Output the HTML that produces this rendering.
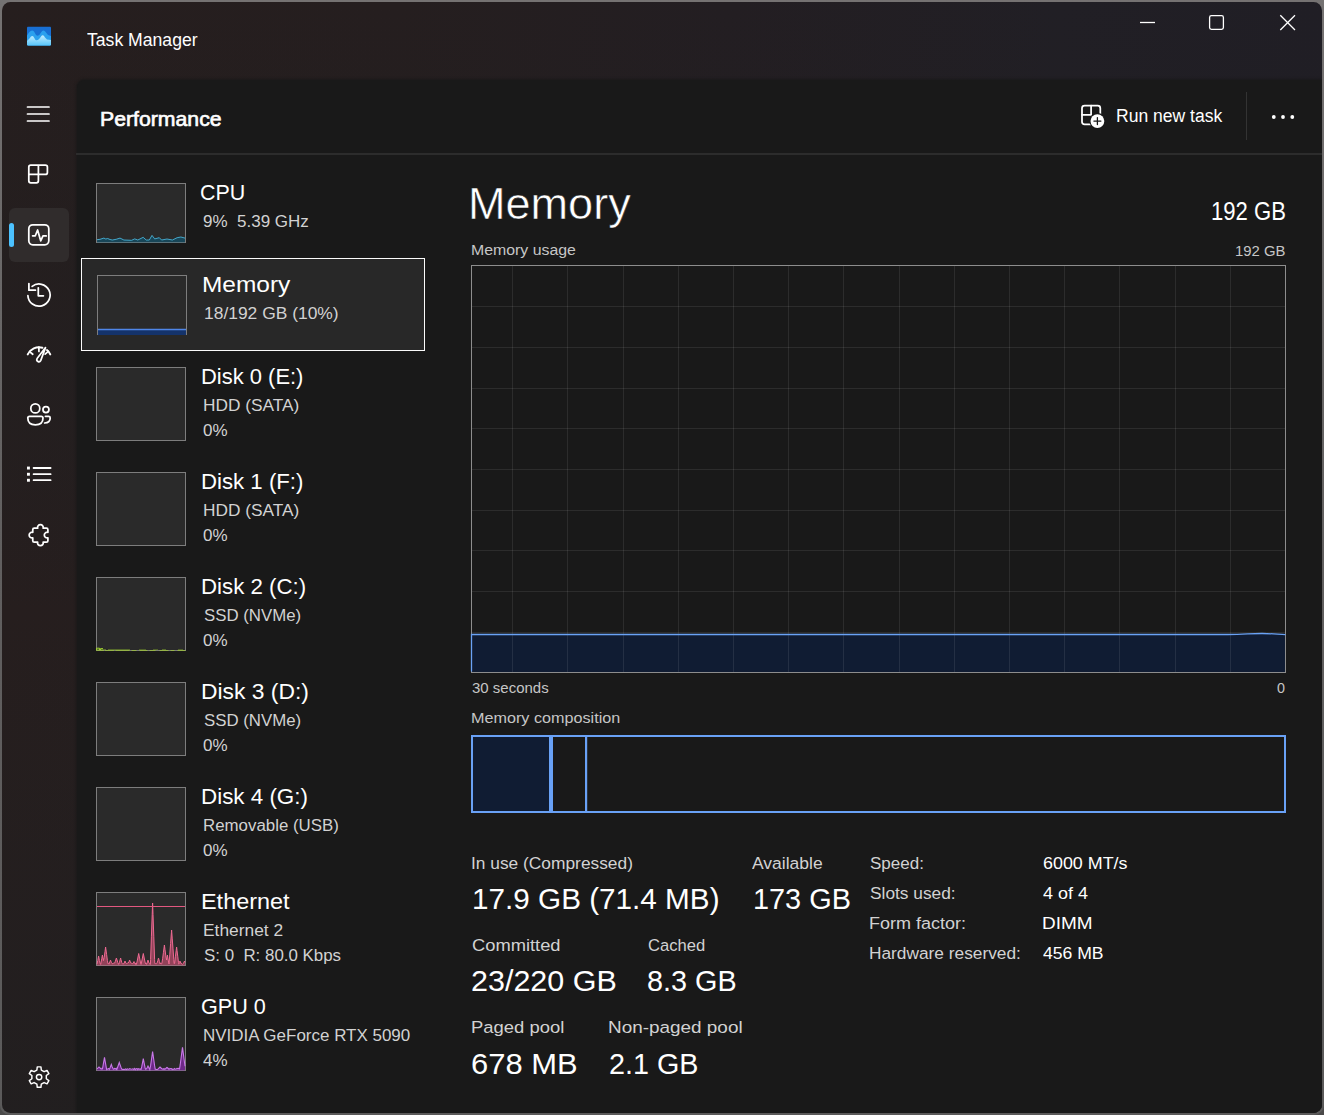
<!DOCTYPE html>
<html lang="en"><head><meta charset="utf-8"><title>Task Manager</title>
<style>
html,body{margin:0;padding:0}
body{width:1324px;height:1115px;overflow:hidden;position:relative;background:linear-gradient(180deg,#747272 0%,#6c6a6a 50%,#4a4949 100%);font-family:"Liberation Sans", "DejaVu Sans", sans-serif;}
.frame{position:absolute;left:0;top:0;width:1324px;height:1115px;border-radius:10px;background:linear-gradient(180deg,#757272 0%,#6a6868 25%,#615f5f 50%,#5b5a5a 100%)}
.win{position:absolute;left:2px;top:2px;width:1319.8px;height:1110.9px;border-radius:8.5px;overflow:hidden;background:linear-gradient(180deg,rgba(38,30,30,0) 0%,rgba(33,31,32,.55) 34%,rgba(37,30,30,0) 55%,rgba(33,31,32,.8) 100%),linear-gradient(90deg,#261e1e 0%,#251e1f 30%,#231e22 55%,#211f25 80%,#201e25 100%);}
.content{position:absolute;left:74.5px;top:78px;right:0;bottom:0;background:#191919;border-top-left-radius:8px;box-shadow:0 0 2.5px 0.5px rgba(25,25,25,.85);}
.hsep{position:absolute;left:74px;right:0;top:151px;height:2px;background:#2c2c2c}
.vsep{position:absolute;left:1243.5px;top:90px;width:1.5px;height:48px;background:#333}
.t{position:absolute;white-space:pre;transform-origin:0 0;display:block}
.th{position:absolute;box-sizing:border-box;border:1px solid #7d7d7d;background:#2a2a2a}
.sel{position:absolute;left:79px;top:256px;width:344px;height:93px;box-sizing:border-box;border:1.4px solid #fbfbfb;background:#282828}
.navsel{position:absolute;left:7px;top:206px;width:60px;height:54px;border-radius:6px;background:#302c2c}
.navind{position:absolute;left:7px;top:221px;width:4.5px;height:24px;border-radius:2.5px;background:#4cc2ff}
svg{position:absolute;left:0;top:0;overflow:visible}
</style></head><body>
<div class="frame"></div>
<div class="win">
<div class="content"></div><div class="hsep"></div><div class="vsep"></div>
<div class="navsel"></div><div class="navind"></div>
<div class="sel"></div>
<div class="th" style="left:94px;top:181px;width:90px;height:60px"></div>
<div class="th" style="left:95px;top:273px;width:90px;height:60px"></div>
<div class="th" style="left:94px;top:365px;width:90px;height:74px"></div>
<div class="th" style="left:94px;top:470px;width:90px;height:74px"></div>
<div class="th" style="left:94px;top:575px;width:90px;height:74px"></div>
<div class="th" style="left:94px;top:680px;width:90px;height:74px"></div>
<div class="th" style="left:94px;top:785px;width:90px;height:74px"></div>
<div class="th" style="left:94px;top:890px;width:90px;height:74px"></div>
<div class="th" style="left:94px;top:995px;width:90px;height:74px"></div></div>
<svg width="1324" height="1115" viewBox="0 0 1324 1115" style="position:absolute;left:0;top:0">
<path d="M471.5 634.5H1228C1244 634.5 1250 633.5 1262 633.5C1272 633.5 1278 634.3 1285.5 634.6V672.5H471.5Z" fill="#101c33"/>
<path d="M1230.5 265.5V672.5M1175.5 265.5V672.5M1119.5 265.5V672.5M1064.5 265.5V672.5M1009.5 265.5V672.5M954.5 265.5V672.5M899.5 265.5V672.5M843.5 265.5V672.5M788.5 265.5V672.5M733.5 265.5V672.5M678.5 265.5V672.5M623.5 265.5V672.5M567.5 265.5V672.5M512.5 265.5V672.5M471.5 306.5H1285.5M471.5 347.5H1285.5M471.5 388.5H1285.5M471.5 428.5H1285.5M471.5 469.5H1285.5M471.5 510.5H1285.5M471.5 550.5H1285.5M471.5 591.5H1285.5M471.5 632.5H1285.5" stroke="#ffffff" stroke-opacity="0.085" stroke-width="1" fill="none"/>
<rect x="471.5" y="265.5" width="814.0" height="407.0" fill="none" stroke="#8d8d8d" stroke-width="1"/>
<path d="M471.5 671.5V634.5H1228C1244 634.5 1250 633.5 1262 633.5C1272 633.5 1278 634.3 1285.5 634.6" fill="none" stroke="#6aa2f5" stroke-width="1.3"/>
<rect x="473" y="737" width="76" height="74" fill="#101c33"/>
<rect x="472" y="736" width="813" height="76" fill="none" stroke="#69a1f6" stroke-width="2"/>
<rect x="549" y="735" width="4" height="78" fill="#69a1f6"/>
<rect x="585" y="735" width="2.2" height="78" fill="#69a1f6"/>
<path d="M97.0 239.7L100.0 239.3L103.9 238.1L105.8 239.0L107.7 238.5L110.0 239.5L112.3 240.0L116.2 239.3L120.0 238.1L123.9 240.0L131.6 240.3L134.7 238.9L137.8 240.0L143.2 237.3L146.2 240.0L149.3 240.0L152.0 235.4L154.7 238.9L159.3 237.7L161.6 240.0L167.0 239.0L172.4 240.0L177.1 237.7L180.9 237.0L185.0 238.1L185 242.5L97 242.5Z" fill="#0e5a78" fill-opacity="0.6"/>
<path d="M97.0 239.7L100.0 239.3L103.9 238.1L105.8 239.0L107.7 238.5L110.0 239.5L112.3 240.0L116.2 239.3L120.0 238.1L123.9 240.0L131.6 240.3L134.7 238.9L137.8 240.0L143.2 237.3L146.2 240.0L149.3 240.0L152.0 235.4L154.7 238.9L159.3 237.7L161.6 240.0L167.0 239.0L172.4 240.0L177.1 237.7L180.9 237.0L185.0 238.1" fill="none" stroke="#4ab9e0" stroke-width="0.85" stroke-linejoin="round"/>
<rect x="98" y="329.5" width="88" height="5.5" fill="#14336b"/>
<path d="M98 329.5H186" stroke="#4f86e8" stroke-width="1.4"/>
<path d="M97 650.5H186" stroke="#9fc43a" stroke-opacity="0.75" stroke-width="1" stroke-dasharray="7 1 9 1.5 14 2 5 3 8 2 6 4 9 2 4 3 8 1"/>
<path d="M97 649.6H106M108 649.7H130M139 649.8H146M153 649.8H158M162 649.7H166M178 649.8H183" stroke="#8db82e" stroke-opacity="0.55" stroke-width="1"/>
<path d="M96.5 650.5V648.2H99.5V650M100.5 650V648.6H103" fill="none" stroke="#9fd030" stroke-width="1"/>
<path d="M97.0 964.1L97.8 960.5L98.6 956.0L99.4 960.5L100.2 963.6L100.6 964.4L101.0 962.8L101.8 958.3L102.4 955.0L102.6 956.1L103.2 959.4L103.4 960.6L104.2 957.5L105.0 951.5L105.6 947.0L105.8 948.5L106.6 954.5L107.4 960.5L108.0 963.7L108.2 963.4L108.7 963.5L109.0 964.2L109.8 961.9L110.5 960.0L110.6 960.3L111.4 962.5L112.2 963.2L112.3 963.8L113.0 963.4L113.8 963.2L114.2 963.4L114.6 963.1L115.4 961.2L116.2 958.6L116.4 958.0L117.0 959.9L117.8 962.5L118.6 964.4L118.8 964.3L119.4 962.7L120.2 959.6L120.6 958.0L121.0 959.6L121.8 962.7L122.4 963.7L122.6 963.9L123.4 964.0L124.2 963.0L125.0 961.0L125.8 963.0L126.6 963.5L127.4 963.1L127.8 963.2L128.2 963.0L129.0 961.7L129.6 960.0L129.8 960.6L130.6 962.8L131.4 963.1L132.2 963.6L132.4 963.4L133.0 963.7L133.8 961.9L134.0 961.5L134.6 962.8L135.4 964.4L135.6 963.2L136.2 963.0L136.4 964.4L137.0 962.0L137.8 958.0L138.6 954.0L138.7 953.5L139.4 957.0L140.2 961.0L141.0 964.4L141.8 961.0L142.6 957.0L143.3 953.5L143.4 954.0L144.2 958.0L145.0 962.0L145.6 963.7L145.8 963.0L146.4 964.0L146.6 964.4L147.4 961.9L148.0 960.0L148.2 960.6L149.0 963.1L149.6 963.6L149.8 964.3L150.4 964.4L150.6 959.4L151.4 936.8L152.2 914.3L152.6 903.0L153.0 914.3L153.8 936.8L154.6 959.4L154.8 963.5L155.4 963.6L156.2 963.7L156.7 963.6L157.0 963.1L157.8 960.7L158.5 958.0L158.6 958.4L159.4 961.5L160.2 964.0L160.3 963.0L161.0 963.7L161.8 963.7L162.6 958.8L163.4 952.7L164.2 946.5L164.4 945.0L165.0 949.6L165.8 955.8L166.6 960.0L167.0 957.5L167.4 955.0L168.2 960.0L169.0 964.0L169.8 954.2L170.6 943.5L171.4 932.7L171.6 930.0L172.2 938.1L173.0 948.8L173.8 959.6L174.2 963.8L174.4 963.6L174.6 963.4L175.4 956.8L176.2 950.3L176.6 947.0L177.0 950.3L177.8 956.8L178.5 962.5L178.6 963.3L178.8 964.2L179.4 962.6L180.0 961.0L180.2 961.5L181.0 963.7L181.5 963.3L181.8 964.1L182.6 964.2L183.0 963.8L183.4 963.5L184.2 961.8L184.5 961.0L185.0 962.3L185 965.5L97 965.5Z" fill="#e8557f" fill-opacity="0.55"/>
<path d="M97.0 964.1L97.8 960.5L98.6 956.0L99.4 960.5L100.2 963.6L100.6 964.4L101.0 962.8L101.8 958.3L102.4 955.0L102.6 956.1L103.2 959.4L103.4 960.6L104.2 957.5L105.0 951.5L105.6 947.0L105.8 948.5L106.6 954.5L107.4 960.5L108.0 963.7L108.2 963.4L108.7 963.5L109.0 964.2L109.8 961.9L110.5 960.0L110.6 960.3L111.4 962.5L112.2 963.2L112.3 963.8L113.0 963.4L113.8 963.2L114.2 963.4L114.6 963.1L115.4 961.2L116.2 958.6L116.4 958.0L117.0 959.9L117.8 962.5L118.6 964.4L118.8 964.3L119.4 962.7L120.2 959.6L120.6 958.0L121.0 959.6L121.8 962.7L122.4 963.7L122.6 963.9L123.4 964.0L124.2 963.0L125.0 961.0L125.8 963.0L126.6 963.5L127.4 963.1L127.8 963.2L128.2 963.0L129.0 961.7L129.6 960.0L129.8 960.6L130.6 962.8L131.4 963.1L132.2 963.6L132.4 963.4L133.0 963.7L133.8 961.9L134.0 961.5L134.6 962.8L135.4 964.4L135.6 963.2L136.2 963.0L136.4 964.4L137.0 962.0L137.8 958.0L138.6 954.0L138.7 953.5L139.4 957.0L140.2 961.0L141.0 964.4L141.8 961.0L142.6 957.0L143.3 953.5L143.4 954.0L144.2 958.0L145.0 962.0L145.6 963.7L145.8 963.0L146.4 964.0L146.6 964.4L147.4 961.9L148.0 960.0L148.2 960.6L149.0 963.1L149.6 963.6L149.8 964.3L150.4 964.4L150.6 959.4L151.4 936.8L152.2 914.3L152.6 903.0L153.0 914.3L153.8 936.8L154.6 959.4L154.8 963.5L155.4 963.6L156.2 963.7L156.7 963.6L157.0 963.1L157.8 960.7L158.5 958.0L158.6 958.4L159.4 961.5L160.2 964.0L160.3 963.0L161.0 963.7L161.8 963.7L162.6 958.8L163.4 952.7L164.2 946.5L164.4 945.0L165.0 949.6L165.8 955.8L166.6 960.0L167.0 957.5L167.4 955.0L168.2 960.0L169.0 964.0L169.8 954.2L170.6 943.5L171.4 932.7L171.6 930.0L172.2 938.1L173.0 948.8L173.8 959.6L174.2 963.8L174.4 963.6L174.6 963.4L175.4 956.8L176.2 950.3L176.6 947.0L177.0 950.3L177.8 956.8L178.5 962.5L178.6 963.3L178.8 964.2L179.4 962.6L180.0 961.0L180.2 961.5L181.0 963.7L181.5 963.3L181.8 964.1L182.6 964.2L183.0 963.8L183.4 963.5L184.2 961.8L184.5 961.0L185.0 962.3" fill="none" stroke="#ee6a92" stroke-width="1"/>
<path d="M97 906.5H185" stroke="#e35880" stroke-width="1"/>
<path d="M97.0 1068.9L97.8 1068.2L98.6 1067.4L99.0 1067.0L99.4 1067.4L100.2 1068.2L101.0 1069.0L101.8 1069.0L102.0 1068.5L102.3 1068.8L102.6 1068.3L103.4 1063.7L104.2 1059.1L104.5 1057.4L105.0 1060.3L105.8 1064.8L106.6 1069.4L106.7 1069.3L107.4 1069.3L108.2 1068.5L109.0 1068.7L109.3 1069.4L109.8 1068.6L110.6 1066.4L111.3 1064.5L111.4 1064.8L112.2 1067.0L113.0 1068.6L113.3 1069.3L113.8 1069.3L114.6 1068.4L115.4 1068.6L116.2 1069.3L116.7 1068.4L117.0 1069.0L117.8 1066.8L118.6 1064.5L119.3 1062.5L119.4 1062.8L120.2 1065.1L121.0 1067.4L121.8 1069.2L121.9 1069.2L122.6 1069.4L123.4 1069.4L124.2 1069.5L125.0 1069.2L125.8 1068.9L126.6 1069.6L127.4 1068.8L128.2 1069.2L129.0 1069.2L129.8 1068.6L130.6 1069.0L131.4 1069.2L132.2 1069.0L133.0 1068.8L133.8 1069.5L134.6 1068.4L135.4 1069.6L136.2 1068.7L137.0 1068.6L137.8 1069.6L138.6 1068.7L139.4 1069.2L140.2 1068.9L141.0 1069.6L141.1 1069.5L141.8 1066.4L142.6 1062.3L143.3 1058.7L143.4 1059.2L144.2 1063.3L145.0 1067.4L145.5 1069.2L145.8 1069.2L146.0 1069.0L146.6 1068.7L147.4 1067.2L148.0 1066.0L148.2 1066.4L149.0 1068.0L149.8 1069.6L150.0 1068.5L150.6 1065.7L151.4 1060.0L152.2 1054.3L152.6 1051.5L153.0 1054.3L153.8 1060.0L154.6 1065.7L155.2 1069.2L155.4 1069.2L156.2 1069.4L157.0 1069.5L157.8 1069.2L158.6 1068.4L159.4 1067.6L160.0 1067.0L160.2 1067.2L161.0 1068.0L161.8 1068.8L162.6 1069.1L163.0 1069.3L163.4 1068.9L164.0 1068.6L164.2 1069.1L165.0 1069.1L165.8 1068.5L166.6 1067.8L167.0 1067.5L167.4 1067.8L168.2 1068.5L169.0 1069.2L169.8 1068.7L170.0 1068.5L170.6 1068.8L171.4 1068.7L172.2 1069.5L173.0 1069.1L173.8 1069.4L174.6 1068.6L175.4 1069.2L176.2 1069.1L177.0 1068.4L177.8 1068.6L178.6 1068.4L179.4 1069.1L179.5 1069.0L180.2 1064.7L181.0 1058.7L181.8 1052.6L182.5 1047.3L182.6 1048.1L183.4 1054.1L184.2 1060.2L185.0 1066.2L185 1070.5L97 1070.5Z" fill="#8a28b0" fill-opacity="0.7"/>
<path d="M97.0 1068.9L97.8 1068.2L98.6 1067.4L99.0 1067.0L99.4 1067.4L100.2 1068.2L101.0 1069.0L101.8 1069.0L102.0 1068.5L102.3 1068.8L102.6 1068.3L103.4 1063.7L104.2 1059.1L104.5 1057.4L105.0 1060.3L105.8 1064.8L106.6 1069.4L106.7 1069.3L107.4 1069.3L108.2 1068.5L109.0 1068.7L109.3 1069.4L109.8 1068.6L110.6 1066.4L111.3 1064.5L111.4 1064.8L112.2 1067.0L113.0 1068.6L113.3 1069.3L113.8 1069.3L114.6 1068.4L115.4 1068.6L116.2 1069.3L116.7 1068.4L117.0 1069.0L117.8 1066.8L118.6 1064.5L119.3 1062.5L119.4 1062.8L120.2 1065.1L121.0 1067.4L121.8 1069.2L121.9 1069.2L122.6 1069.4L123.4 1069.4L124.2 1069.5L125.0 1069.2L125.8 1068.9L126.6 1069.6L127.4 1068.8L128.2 1069.2L129.0 1069.2L129.8 1068.6L130.6 1069.0L131.4 1069.2L132.2 1069.0L133.0 1068.8L133.8 1069.5L134.6 1068.4L135.4 1069.6L136.2 1068.7L137.0 1068.6L137.8 1069.6L138.6 1068.7L139.4 1069.2L140.2 1068.9L141.0 1069.6L141.1 1069.5L141.8 1066.4L142.6 1062.3L143.3 1058.7L143.4 1059.2L144.2 1063.3L145.0 1067.4L145.5 1069.2L145.8 1069.2L146.0 1069.0L146.6 1068.7L147.4 1067.2L148.0 1066.0L148.2 1066.4L149.0 1068.0L149.8 1069.6L150.0 1068.5L150.6 1065.7L151.4 1060.0L152.2 1054.3L152.6 1051.5L153.0 1054.3L153.8 1060.0L154.6 1065.7L155.2 1069.2L155.4 1069.2L156.2 1069.4L157.0 1069.5L157.8 1069.2L158.6 1068.4L159.4 1067.6L160.0 1067.0L160.2 1067.2L161.0 1068.0L161.8 1068.8L162.6 1069.1L163.0 1069.3L163.4 1068.9L164.0 1068.6L164.2 1069.1L165.0 1069.1L165.8 1068.5L166.6 1067.8L167.0 1067.5L167.4 1067.8L168.2 1068.5L169.0 1069.2L169.8 1068.7L170.0 1068.5L170.6 1068.8L171.4 1068.7L172.2 1069.5L173.0 1069.1L173.8 1069.4L174.6 1068.6L175.4 1069.2L176.2 1069.1L177.0 1068.4L177.8 1068.6L178.6 1068.4L179.4 1069.1L179.5 1069.0L180.2 1064.7L181.0 1058.7L181.8 1052.6L182.5 1047.3L182.6 1048.1L183.4 1054.1L184.2 1060.2L185.0 1066.2" fill="none" stroke="#c878e8" stroke-width="1.1"/>
<defs><clipPath id="ic"><rect x="27" y="26.5" width="24" height="19" rx="1.2"/></clipPath><linearGradient id="ig" x1="0" y1="0" x2="0" y2="1"><stop offset="0" stop-color="#c4ecff"/><stop offset="1" stop-color="#52c4fa"/></linearGradient></defs>
<g clip-path="url(#ic)"><rect x="27" y="26.5" width="24" height="19" fill="#186fd3"/><path d="M27 35.5L29 32.5Q32 28.8 34 31.6L36 35Q38.5 37.5 41 32.5Q43 28.8 45.2 31.6L48 35L51 36V46H27Z" fill="#2ba0ee"/><path d="M27 41L29.5 38.5Q32.5 34 34.3 38L35.5 40Q38.5 41 41 36.5Q43 33.5 45 37.5L47 39.5L51 40V46H27Z" fill="url(#ig)"/></g>
<path d="M1140 22.5H1155" stroke="#ffffff" stroke-width="1.3" fill="none"/>
<rect x="1209.6" y="15.6" width="13.8" height="13.8" rx="1.8" fill="none" stroke="#ffffff" stroke-width="1.3"/>
<path d="M1280.3 15.3L1295 30M1295 15.3L1280.3 30" stroke="#ffffff" stroke-width="1.3" fill="none"/>
<path d="M27.5 107H49M27.5 114H49M27.5 121H49" stroke="#ffffff" stroke-width="1.7" stroke-linecap="round" fill="none"/>
<path d="M30.8 165H45.4Q47.4 165 47.4 167V172.4Q47.4 174.4 45.4 174.4H38.4V180.8Q38.4 182.8 36.4 182.8H30.8Q28.8 182.8 28.8 180.8V167Q28.8 165 30.8 165ZM38.4 165V174.4M28.8 174.4H38.4" fill="none" stroke="#ffffff" stroke-width="1.75" stroke-linecap="round" stroke-linejoin="round"/>
<rect x="28.8" y="224.8" width="20" height="20" rx="4" fill="none" stroke="#ffffff" stroke-width="1.75" stroke-linecap="round" stroke-linejoin="round"/>
<path d="M32.6 235.8H35.3L37.6 230L40.7 240.8L43.0 235.9H46.2" fill="none" stroke="#ffffff" stroke-width="1.75" stroke-linecap="round" stroke-linejoin="round"/>
<path d="M28.9 283.6V290.2H35.4" fill="none" stroke="#ffffff" stroke-width="1.75" stroke-linecap="round" stroke-linejoin="round"/>
<path d="M32.17 286.35A11.1 11.1 0 1 1 27.92 295.68" fill="none" stroke="#ffffff" stroke-width="1.75" stroke-linecap="round" stroke-linejoin="round"/>
<path d="M38.3 287.8V295.8H43.4" fill="none" stroke="#ffffff" stroke-width="1.75" stroke-linecap="round" stroke-linejoin="round"/>
<path d="M27.74 354.40A12.4 12.4 0 0 1 42.42 347.68M46.97 350.10A12.4 12.4 0 0 1 50.26 354.40" fill="none" stroke="#ffffff" stroke-width="2.0" stroke-linecap="round" stroke-linejoin="round"/>
<path d="M29.57 351.55L32.76 354.27M38.89 347.20L38.93 351.40M48.29 351.38L45.14 354.17" fill="none" stroke="#ffffff" stroke-width="1.75" stroke-linecap="round" stroke-linejoin="round"/>
<path d="M45.5 347.6L37.1 358.6A2.05 2.05 0 0 0 40.7 360.6Z" fill="none" stroke="#ffffff" stroke-width="1.7" stroke-linejoin="round"/>
<circle cx="35.3" cy="408.4" r="4.5" fill="none" stroke="#ffffff" stroke-width="1.75" stroke-linecap="round" stroke-linejoin="round"/>
<circle cx="45.95" cy="409.6" r="3.0" fill="none" stroke="#ffffff" stroke-width="1.75" stroke-linecap="round" stroke-linejoin="round"/>
<path d="M29.6 416.3H41.2Q43 416.3 43 418.1Q43 424.9 35.4 424.9Q27.8 424.9 27.8 418.1Q27.8 416.3 29.6 416.3Z" fill="none" stroke="#ffffff" stroke-width="1.75" stroke-linecap="round" stroke-linejoin="round"/>
<path d="M45.4 416.3H48.6Q50.2 416.3 50.2 417.9Q50.2 422.6 44.6 423" fill="none" stroke="#ffffff" stroke-width="1.75" stroke-linecap="round" stroke-linejoin="round"/>
<path d="M33.6 468H50.6M33.6 474.2H50.6M33.6 480.2H50.6" stroke="#ffffff" stroke-width="1.8" stroke-linecap="round" fill="none"/>
<rect x="27" y="466.6" width="2.9" height="2.9" fill="#ffffff"/><rect x="27" y="472.8" width="2.9" height="2.9" fill="#ffffff"/><rect x="27" y="478.8" width="2.9" height="2.9" fill="#ffffff"/>
<path d="M34.25 528.15H37.65A2.85 2.85 0 1 1 43.15 528.15H46.4Q47.9 528.15 47.9 529.65V532.35A2.85 2.85 0 1 0 47.9 537.85V540.65Q47.9 542.15 46.4 542.15H43.15A2.85 2.85 0 1 1 37.65 542.15H34.25Q32.75 542.15 32.75 540.65V537.85A2.85 2.85 0 1 1 32.75 532.35V529.65Q32.75 528.15 34.25 528.15Z" fill="none" stroke="#ffffff" stroke-width="1.75" stroke-linecap="round" stroke-linejoin="round"/>
<path d="M36.89 1070.04L37.26 1066.86L40.94 1066.86L41.31 1070.04L44.11 1071.65L47.04 1070.39L48.89 1073.58L46.32 1075.49L46.32 1078.71L48.89 1080.62L47.04 1083.81L44.11 1082.55L41.31 1084.16L40.94 1087.34L37.26 1087.34L36.89 1084.16L34.09 1082.55L31.16 1083.81L29.31 1080.62L31.88 1078.71L31.88 1075.49L29.31 1073.58L31.16 1070.39L34.09 1071.65Z" fill="none" stroke="#ffffff" stroke-width="1.45" stroke-linecap="round" stroke-linejoin="round"/>
<circle cx="39.1" cy="1077.1" r="2.7" fill="none" stroke="#ffffff" stroke-width="1.45" stroke-linecap="round" stroke-linejoin="round"/>
<rect x="1082" y="105.7" width="18.3" height="18.6" rx="2.6" fill="none" stroke="#ffffff" stroke-width="1.75" stroke-linecap="round" stroke-linejoin="round"/>
<path d="M1091.1 105.7V114.8H1082" fill="none" stroke="#ffffff" stroke-width="1.75" stroke-linecap="round" stroke-linejoin="round"/>
<circle cx="1097.4" cy="121.1" r="8" fill="#191919"/>
<circle cx="1097.4" cy="121.1" r="6.9" fill="#ffffff"/>
<path d="M1097.4 117.6V124.6M1093.9 121.1H1100.9" stroke="#191919" stroke-width="1.3" stroke-linecap="round"/>
<circle cx="1273.8" cy="117" r="1.9" fill="#ffffff"/><circle cx="1283" cy="117" r="1.9" fill="#ffffff"/><circle cx="1292.3" cy="117" r="1.9" fill="#ffffff"/>
</svg>
<span class="t" style="left:86.60px;top:28.26px;font-size:18.3px;line-height:24px;color:#ffffff;font-weight:400;transform:scaleX(0.9631);">Task Manager</span>
<span class="t" style="left:99.58px;top:105.09px;font-size:20.8px;line-height:27px;color:#ffffff;font-weight:400;transform:scaleX(1.0214);-webkit-text-stroke:0.65px #fff;">Performance</span>
<span class="t" style="left:1116.23px;top:105.16px;font-size:18px;line-height:23px;color:#ffffff;font-weight:400;transform:scaleX(0.9747);">Run new task</span>
<span class="t" style="left:200.24px;top:178.14px;font-size:22.4px;line-height:29px;color:#ffffff;font-weight:400;transform:scaleX(0.9578);">CPU</span>
<span class="t" style="left:203.00px;top:210.01px;font-size:17.3px;line-height:22px;color:#d2d2d2;font-weight:400;transform:scaleX(0.9838);">9%&nbsp; 5.39 GHz</span>
<span class="t" style="left:201.91px;top:270.14px;font-size:22.4px;line-height:29px;color:#ffffff;font-weight:400;transform:scaleX(1.0922);">Memory</span>
<span class="t" style="left:204.39px;top:302.01px;font-size:17.3px;line-height:22px;color:#d2d2d2;font-weight:400;transform:scaleX(1.0086);">18/192 GB (10%)</span>
<span class="t" style="left:201.32px;top:362.14px;font-size:22.4px;line-height:29px;color:#ffffff;font-weight:400;transform:scaleX(0.9802);">Disk 0 (E:)</span>
<span class="t" style="left:202.60px;top:394.01px;font-size:17.3px;line-height:22px;color:#d2d2d2;font-weight:400;transform:scaleX(1.0004);">HDD (SATA)</span>
<span class="t" style="left:203.30px;top:418.81px;font-size:17.3px;line-height:22px;color:#d2d2d2;font-weight:400;transform:scaleX(0.9833);">0%</span>
<span class="t" style="left:201.31px;top:467.14px;font-size:22.4px;line-height:29px;color:#ffffff;font-weight:400;transform:scaleX(0.9923);">Disk 1 (F:)</span>
<span class="t" style="left:202.60px;top:499.01px;font-size:17.3px;line-height:22px;color:#d2d2d2;font-weight:400;transform:scaleX(1.0004);">HDD (SATA)</span>
<span class="t" style="left:203.30px;top:523.81px;font-size:17.3px;line-height:22px;color:#d2d2d2;font-weight:400;transform:scaleX(0.9833);">0%</span>
<span class="t" style="left:201.31px;top:572.14px;font-size:22.4px;line-height:29px;color:#ffffff;font-weight:400;transform:scaleX(0.9945);">Disk 2 (C:)</span>
<span class="t" style="left:203.60px;top:604.01px;font-size:17.3px;line-height:22px;color:#d2d2d2;font-weight:400;transform:scaleX(0.9727);">SSD (NVMe)</span>
<span class="t" style="left:203.30px;top:628.81px;font-size:17.3px;line-height:22px;color:#d2d2d2;font-weight:400;transform:scaleX(0.9833);">0%</span>
<span class="t" style="left:201.28px;top:677.14px;font-size:22.4px;line-height:29px;color:#ffffff;font-weight:400;transform:scaleX(1.0204);">Disk 3 (D:)</span>
<span class="t" style="left:203.60px;top:709.01px;font-size:17.3px;line-height:22px;color:#d2d2d2;font-weight:400;transform:scaleX(0.9727);">SSD (NVMe)</span>
<span class="t" style="left:203.30px;top:733.81px;font-size:17.3px;line-height:22px;color:#d2d2d2;font-weight:400;transform:scaleX(0.9833);">0%</span>
<span class="t" style="left:201.30px;top:782.14px;font-size:22.4px;line-height:29px;color:#ffffff;font-weight:400;transform:scaleX(0.9998);">Disk 4 (G:)</span>
<span class="t" style="left:202.62px;top:814.01px;font-size:17.3px;line-height:22px;color:#d2d2d2;font-weight:400;transform:scaleX(0.9753);">Removable (USB)</span>
<span class="t" style="left:203.30px;top:838.81px;font-size:17.3px;line-height:22px;color:#d2d2d2;font-weight:400;transform:scaleX(0.9833);">0%</span>
<span class="t" style="left:201.25px;top:887.14px;font-size:22.4px;line-height:29px;color:#ffffff;font-weight:400;transform:scaleX(1.0459);">Ethernet</span>
<span class="t" style="left:202.60px;top:919.01px;font-size:17.3px;line-height:22px;color:#d2d2d2;font-weight:400;transform:scaleX(1.0047);">Ethernet 2</span>
<span class="t" style="left:203.60px;top:943.81px;font-size:17.3px;line-height:22px;color:#d2d2d2;font-weight:400;transform:scaleX(0.9772);">S: 0&nbsp; R: 80.0 Kbps</span>
<span class="t" style="left:200.84px;top:992.14px;font-size:22.4px;line-height:29px;color:#ffffff;font-weight:400;transform:scaleX(0.9644);">GPU 0</span>
<span class="t" style="left:202.62px;top:1024.01px;font-size:17.3px;line-height:22px;color:#d2d2d2;font-weight:400;transform:scaleX(0.9823);">NVIDIA GeForce RTX 5090</span>
<span class="t" style="left:203.30px;top:1048.81px;font-size:17.3px;line-height:22px;color:#d2d2d2;font-weight:400;transform:scaleX(0.9833);">4%</span>
<span class="t" style="left:468.21px;top:173.74px;font-size:45.2px;line-height:59px;color:#ffffff;font-weight:400;transform:scaleX(0.9969);-webkit-text-stroke:0.55px #191919;">Memory</span>
<span class="t" style="left:1211.12px;top:195.44px;font-size:25.0px;line-height:32px;color:#ffffff;font-weight:400;transform:scaleX(0.8832);">192 GB</span>
<span class="t" style="left:470.76px;top:240.40px;font-size:15.3px;line-height:20px;color:#c6c6c6;font-weight:400;transform:scaleX(1.0365);">Memory usage</span>
<span class="t" style="left:1235.33px;top:240.60px;font-size:15.3px;line-height:20px;color:#c6c6c6;font-weight:400;transform:scaleX(0.9730);">192 GB</span>
<span class="t" style="left:471.80px;top:677.90px;font-size:15.3px;line-height:20px;color:#c6c6c6;font-weight:400;transform:scaleX(0.9798);">30 seconds</span>
<span class="t" style="left:1277.30px;top:677.90px;font-size:15.3px;line-height:20px;color:#c6c6c6;font-weight:400;transform:scaleX(0.9375);">0</span>
<span class="t" style="left:470.74px;top:707.60px;font-size:15.3px;line-height:20px;color:#c6c6c6;font-weight:400;transform:scaleX(1.0580);">Memory composition</span>
<span class="t" style="left:471.09px;top:851.54px;font-size:17.2px;line-height:22px;color:#d2d2d2;font-weight:400;transform:scaleX(1.0091);">In use (Compressed)</span>
<span class="t" style="left:472.41px;top:878.57px;font-size:29.8px;line-height:39px;color:#ffffff;font-weight:400;transform:scaleX(0.9964);">17.9 GB (71.4 MB)</span>
<span class="t" style="left:751.50px;top:851.54px;font-size:17.2px;line-height:22px;color:#d2d2d2;font-weight:400;transform:scaleX(1.0177);">Available</span>
<span class="t" style="left:752.66px;top:878.57px;font-size:29.8px;line-height:39px;color:#ffffff;font-weight:400;transform:scaleX(0.9687);">173 GB</span>
<span class="t" style="left:471.80px;top:933.64px;font-size:17.2px;line-height:22px;color:#d2d2d2;font-weight:400;transform:scaleX(1.0650);">Committed</span>
<span class="t" style="left:471.48px;top:961.17px;font-size:29.8px;line-height:39px;color:#ffffff;font-weight:400;transform:scaleX(1.0235);">23/220 GB</span>
<span class="t" style="left:647.60px;top:933.64px;font-size:17.2px;line-height:22px;color:#d2d2d2;font-weight:400;transform:scaleX(0.9662);">Cached</span>
<span class="t" style="left:647.13px;top:961.17px;font-size:29.8px;line-height:39px;color:#ffffff;font-weight:400;transform:scaleX(0.9672);">8.3 GB</span>
<span class="t" style="left:470.73px;top:1015.84px;font-size:17.2px;line-height:22px;color:#d2d2d2;font-weight:400;transform:scaleX(1.0722);">Paged pool</span>
<span class="t" style="left:471.46px;top:1043.57px;font-size:29.8px;line-height:39px;color:#ffffff;font-weight:400;transform:scaleX(1.0385);">678 MB</span>
<span class="t" style="left:608.00px;top:1015.84px;font-size:17.2px;line-height:22px;color:#d2d2d2;font-weight:400;transform:scaleX(1.1004);">Non-paged pool</span>
<span class="t" style="left:608.63px;top:1043.57px;font-size:29.8px;line-height:39px;color:#ffffff;font-weight:400;transform:scaleX(0.9650);">2.1 GB</span>
<span class="t" style="left:869.90px;top:851.84px;font-size:17.2px;line-height:22px;color:#d2d2d2;font-weight:400;transform:scaleX(0.9888);">Speed:</span>
<span class="t" style="left:869.90px;top:881.84px;font-size:17.2px;line-height:22px;color:#d2d2d2;font-weight:400;transform:scaleX(1.0065);">Slots used:</span>
<span class="t" style="left:868.85px;top:911.84px;font-size:17.2px;line-height:22px;color:#d2d2d2;font-weight:400;transform:scaleX(1.0478);">Form factor:</span>
<span class="t" style="left:868.89px;top:941.74px;font-size:17.2px;line-height:22px;color:#d2d2d2;font-weight:400;transform:scaleX(1.0064);">Hardware reserved:</span>
<span class="t" style="left:1042.60px;top:851.84px;font-size:17.2px;line-height:22px;color:#ffffff;font-weight:400;transform:scaleX(1.0409);">6000 MT/s</span>
<span class="t" style="left:1042.60px;top:881.84px;font-size:17.2px;line-height:22px;color:#ffffff;font-weight:400;transform:scaleX(1.0450);">4 of 4</span>
<span class="t" style="left:1042.20px;top:911.84px;font-size:17.2px;line-height:22px;color:#ffffff;font-weight:400;transform:scaleX(1.1033);">DIMM</span>
<span class="t" style="left:1042.60px;top:941.74px;font-size:17.2px;line-height:22px;color:#ffffff;font-weight:400;transform:scaleX(1.0226);">456 MB</span>
</body></html>
